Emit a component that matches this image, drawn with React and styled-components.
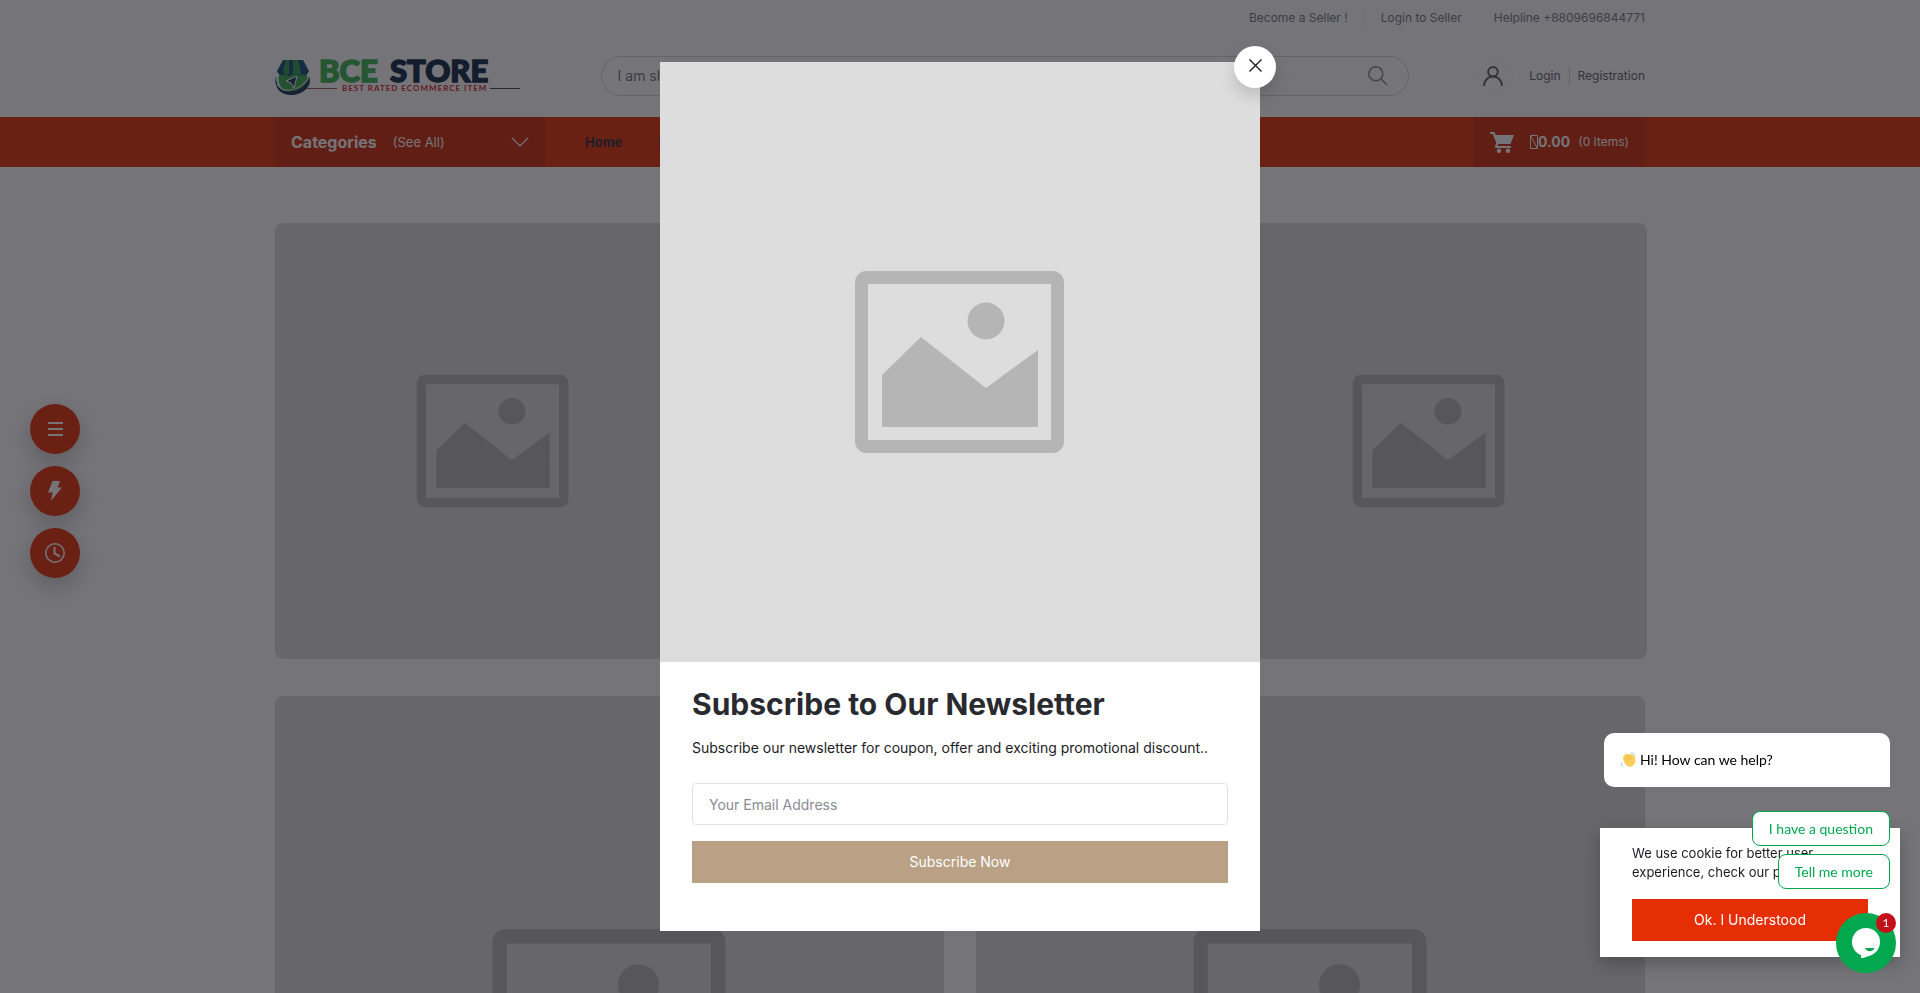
import React, { useState } from 'react'
import styled, { createGlobalStyle } from 'styled-components'

const GlobalStyle = createGlobalStyle`
  *, *::before, *::after {
    box-sizing: border-box;
  }

  body {
    margin: 0;
    height: 100vh;
    overflow: hidden;
    background: #fff;
    color: #1b1b1f;
    font-family: Inter, "Liberation Sans", sans-serif;
    font-size: 14px;
    line-height: 20px;
  }

  a {
    color: inherit;
    text-decoration: none;
  }

  button, input {
    margin: 0;
    font: inherit;
  }

  button {
    padding: 0;
    border: 0;
    cursor: pointer;
  }

  h3, p {
    margin: 0;
  }

  svg {
    display: block;
  }
`

const Container = styled.div`
  display: flex;
  align-items: center;
  width: 100%;
  max-width: 1400px;
  margin: 0 auto;
  padding: 0 15px;
`

const TopLinks = styled(Container)`
  justify-content: flex-end;
  height: 36px;
  gap: 32px;
  font-size: 12px;
  color: #77777c;
`

const SellerLink = styled.a`
  padding-right: 16px;
  margin-right: -16px;
  border-right: 1px solid #eee;
`

const HeaderRow = styled(Container)`
  justify-content: space-between;
  height: 80px;
  margin-bottom: 1px;
`

const LogoLink = styled.a`
  flex: 0 0 325px;
`

const SearchForm = styled.form`
  display: flex;
  align-items: center;
  flex: 1;
  max-width: 808px;
  height: 40px;
  padding: 0 20px 0 14px;
  border: 1px solid #d5d5d8;
  border-radius: 20px;
`

const SearchInput = styled.input`
  flex: 1;
  min-width: 0;
  border: 0;
  outline: 0;
  background: transparent;

  &::placeholder {
    color: #77777c;
    opacity: 1;
  }
`

const IconButton = styled.button`
  background: transparent;
  color: #8a8a90;
`

const Account = styled.div`
  display: flex;
  align-items: center;
  margin-left: 64px;
  font-size: 12px;
  color: #5c5c62;
`

const Avatar = styled.span`
  display: flex;
  align-items: center;
  justify-content: center;
  width: 40px;
  height: 40px;
  margin-right: 16px;
  border: 1px solid #fafafa;
  border-radius: 50%;
`

const LoginLink = styled.a`
  padding-right: 8px;
  margin-right: 8px;
  border-right: 1px solid #d8d8dc;
`

const NavBar = styled.nav`
  background: #e62e04;
`

const NavRow = styled(Container)`
  height: 50px;
`

const CategoryButton = styled.button`
  display: flex;
  align-items: center;
  width: 270px;
  height: 100%;
  padding: 0 16px;
  background: rgba(0, 0, 0, 0.1);
  color: #fff;
`

const CategoryTitle = styled.span`
  margin-right: 16px;
  font-size: 16px;
  font-weight: 700;
`

const CategoryHint = styled.span`
  flex: 1;
  font-size: 13px;
  text-align: left;
`

const Menu = styled.div`
  display: flex;
  flex: 1;
  gap: 36px;
  padding-left: 40px;
  font-size: 13px;
  font-weight: 700;
  color: #2a2a36;
`

const CartLink = styled.a`
  display: flex;
  align-items: center;
  height: 100%;
  padding: 0 16px;
  background: rgba(0, 0, 0, 0.1);
  color: #fff;
`

const CartTotal = styled.span`
  display: flex;
  align-items: center;
  margin: 0 8px 0 16px;
  font-weight: 700;
`

const CartCount = styled.span`
  font-size: 12px;
`

const Section = styled(Container)`
  gap: 32px;
  padding-top: ${props => props.$top}px;
  padding-right: ${props => props.$bleed ? 13 : 15}px;
`

const Card = styled.a`
  flex: 1;
  aspect-ratio: 1;
  overflow: hidden;
  border-radius: 8px;
  background: #ddd;
`

const QuickLinks = styled.div`
  position: fixed;
  top: 404px;
  left: 30px;
  display: flex;
  flex-direction: column;
  gap: 12px;
`

const QuickButton = styled.button`
  display: flex;
  align-items: center;
  justify-content: center;
  width: 50px;
  height: 50px;
  border-radius: 50%;
  background: #e62e04;
  color: #fff;
  box-shadow: 0 8px 24px rgba(0, 0, 0, 0.25);
`

const Backdrop = styled.div`
  position: fixed;
  inset: 0;
  display: flex;
  align-items: center;
  justify-content: center;
  background: rgba(25, 24, 32, 0.6);
`

const Modal = styled.div`
  position: relative;
  width: 600px;
  background: #fff;
`

const CloseButton = styled.button`
  position: absolute;
  top: -16px;
  right: -16px;
  display: flex;
  align-items: center;
  justify-content: center;
  width: 42px;
  height: 42px;
  padding-bottom: 4px;
  border-radius: 50%;
  background: #fff;
  color: #1b1b1b;
  box-shadow: 0 8px 16px rgba(0, 0, 0, 0.15);
`

const ModalImage = styled.div`
  background: #ddd;
`

const ModalBody = styled.div`
  padding: 20px 32px 48px;
`

const Heading = styled.h3`
  font-size: 30px;
  font-weight: 700;
  line-height: 44px;
  color: #292930;
`

const Lead = styled.p`
  margin: 12px 0 25px;
`

const SubscribeForm = styled.form`
  display: flex;
  flex-direction: column;
  gap: 16px;
`

const EmailInput = styled.input`
  height: 42px;
  padding: 0 16px;
  border: 1px solid #e0e0e4;
  border-radius: 4px;
  outline: 0;

  &::placeholder {
    color: #898b92;
    opacity: 1;
  }
`

const SubmitButton = styled.button`
  height: 42px;
  background: ${props => props.$color};
  color: #fff;
`

const CookieBox = styled.div`
  position: fixed;
  right: 20px;
  bottom: 36px;
  display: flex;
  flex-direction: column;
  width: 300px;
  padding: 16px 32px;
  background: #fff;
  box-shadow: 0 6px 16px rgba(0, 0, 0, 0.25);
`

const CookieText = styled.p`
  margin-bottom: 17px;
  font-size: 13px;
  line-height: 19px;
`

const Chat = styled.div`
  position: fixed;
  right: 30px;
  bottom: 104px;
  display: flex;
  flex-direction: column;
  align-items: flex-end;
  gap: 8px;
  font-family: Lato, sans-serif;
  font-size: 14px;
`

const ChatMessage = styled.div`
  display: flex;
  align-items: center;
  gap: 4px;
  width: 286px;
  height: 54px;
  margin-bottom: 16px;
  padding: 0 16px;
  border-radius: 10px 10px 0 10px;
  background: #fff;
  color: #000;
`

const ChatOption = styled.button`
  height: 35px;
  padding: 0 16px;
  border: 1px solid #03a84e;
  border-radius: 8px;
  background: #fff;
  color: #03a84e;
`

const ChatLauncher = styled.button`
  position: fixed;
  right: 24px;
  bottom: 20px;
  display: flex;
  align-items: center;
  justify-content: center;
  width: 60px;
  height: 60px;
  border-radius: 50%;
  background: #03a84e;
`

const ChatBadge = styled.span`
  position: absolute;
  top: 0;
  right: 0;
  width: 20px;
  height: 20px;
  border-radius: 50%;
  background: #c4101a;
  color: #fff;
  font-family: Lato, sans-serif;
  font-size: 12px;
  line-height: 19px;
  text-align: center;
`

const Placeholder = () => (
  <svg viewBox='0 0 600 600' width='100%' aria-hidden='true'>
    <rect x='201.5' y='215.5' width='196' height='169' rx='5' fill='none' stroke='#b5b5b5' strokeWidth='13' />
    <circle cx='326' cy='259' r='18.5' fill='#b5b5b5' />
    <path d='M222 313l39-38 65 51 52-38v77H222z' fill='#b5b5b5' />
  </svg>
)

const Logo = () => (
  <svg width='245' height='44' viewBox='0 -4 245 44' role='img' aria-label='BCE Store'>
    <circle cx='18' cy='21' r='14.5' fill='#35a94c' />
    <path d='M8 2h20l6 11a5 5 0 0 1-8 3 5 5 0 0 1-8 0 5 5 0 0 1-8 0 5 5 0 0 1-8-3z' fill='#164a74' />
    <path d='M14 2h-3L8 13a4 4 0 0 0 6 3z M18 2h5l3 13a5 5 0 0 1-8 1z' fill='#2c9b4c' />
    <path d='M11 23l11-5-3 12-3-5z' fill='#12304f' stroke='#fff' />
    <path d='M1 18c0 12 8 17 16 15 9-1 16-7 17-15 4 11-6 18-16 19C7 38-2 31 1 18z' fill='#12304f' />
    <path d='M2 26c5 9 20 9 31-5' fill='none' stroke='#d8e6df' strokeWidth='1.2' />
    <g fontFamily='Lato' fontSize='31' fontWeight='900' strokeWidth='1.5'>
      <text x='44' y='24' fill='#35b34c' stroke='#35b34c'>BCE</text>
      <text x='115' y='24' fill='#0e2742' stroke='#0e2742'>STORE</text>
    </g>
    <path d='M31 30.5h31' stroke='#9a5548' />
    <text x='67' y='33' fontFamily='Lato' fontSize='8' fontWeight='700' letterSpacing='1' fill='#d32023'>BEST RATED ECOMMERCE ITEM</text>
    <path d='M215 30.5h30' stroke='#444' />
  </svg>
)

const App = () => {
  const [open, setOpen] = useState(true)

  return (
    <>
      <GlobalStyle />
      <header>
        <TopLinks>
          <SellerLink href='#seller'>Become a Seller !</SellerLink>
          <a href='#seller-login'>Login to Seller</a>
          <a href='tel:+8809696844771'>Helpline +8809696844771</a>
        </TopLinks>
        <HeaderRow>
          <LogoLink href='#home'>
            <Logo />
          </LogoLink>
          <SearchForm>
            <SearchInput aria-label='Search' placeholder='I am shopping for...' />
            <IconButton type='button' aria-label='Search'>
              <svg width='20' height='20' viewBox='0 0 20 20' fill='none' stroke='currentColor' strokeWidth='1.5'>
                <circle cx='7.8' cy='7.8' r='7' />
                <path d='M12.8 12.8l6.5 6.5' />
              </svg>
            </IconButton>
          </SearchForm>
          <Account>
            <Avatar>
              <svg width='20' height='20' viewBox='0 0 20 20' fill='none' stroke='currentColor' strokeWidth='2'>
                <circle cx='10' cy='5.8' r='4.8' />
                <path d='M1 20c0-5.500 4-9.400 9-9.400s9 3.900 9 9.400' />
              </svg>
            </Avatar>
            <LoginLink href='#login'>Login</LoginLink>
            <a href='#registration'>Registration</a>
          </Account>
        </HeaderRow>
        <NavBar>
          <NavRow>
            <CategoryButton>
              <CategoryTitle>Categories</CategoryTitle>
              <CategoryHint>(See All)</CategoryHint>
              <svg width='18' height='10' viewBox='0 0 18 10' fill='none' stroke='currentColor' strokeWidth='1.2'>
                <path d='M1 1l8 8 8-8' />
              </svg>
            </CategoryButton>
            <Menu>
              <a href='#home'>Home</a>
              <a href='#flash'>Flash Sale</a>
            </Menu>
            <CartLink href='#cart'>
              <svg width='24' height='21' viewBox='0 0 24 21' fill='currentColor'>
                <path d='M0 0h4.500l1.200 3H24l-3.500 9H8.300l-1 2H21v2H6.500c-1.500 0-2-1-1.500-2l1.400-3L2.800 2H0z' />
                <circle cx='9' cy='18.800' r='2.200' />
                <circle cx='18' cy='18.800' r='2.200' />
              </svg>
              <CartTotal>
                <svg width='8' height='14' viewBox='0 0 8 14' fill='none' stroke='currentColor' role='img' aria-label='Taka'>
                  <path d='M0.500 0.500h7v13h-7zL7.500 13.500' />
                </svg>
                0.00
              </CartTotal>
              <CartCount>(0 Items)</CartCount>
            </CartLink>
          </NavRow>
        </NavBar>
      </header>

      <main>
        <Section $top={56} $bleed>
          {['first', 'second', 'third'].map(name => (
            <Card key={name} href={`#${name}`} aria-label={name}>
              <Placeholder />
            </Card>
          ))}
        </Section>
        <Section $top={37}>
          {['left', 'right'].map(name => (
            <Card key={name} href={`#${name}`} aria-label={name}>
              <Placeholder />
            </Card>
          ))}
        </Section>
      </main>

      <QuickLinks>
        <QuickButton aria-label='Categories'>
          <svg width='15' height='14' viewBox='0 0 15 14' fill='none' stroke='currentColor' strokeWidth='2'>
            <path d='M0 1h15M0 7h15M0 13h15' />
          </svg>
        </QuickButton>
        <QuickButton aria-label='Flash deals'>
          <svg width='14' height='20' viewBox='0 0 14 20' fill='currentColor'>
            <path d='M4.500 0H12L9.500 6.500H14L2.800 20l2-8.500H0z' />
          </svg>
        </QuickButton>
        <QuickButton aria-label='Todays deals'>
          <svg width='20' height='20' viewBox='0 0 20 20' fill='none' stroke='currentColor' strokeWidth='1.5'>
            <circle cx='10' cy='10' r='9.200' />
            <path d='M9.500 4v6.500l5.500 3' strokeWidth='2' />
          </svg>
        </QuickButton>
      </QuickLinks>

      {open && (
        <Backdrop>
          <Modal role='dialog' aria-labelledby='newsletter-title'>
            <ModalImage>
              <Placeholder />
            </ModalImage>
            <ModalBody>
              <Heading id='newsletter-title'>Subscribe to Our Newsletter</Heading>
              <Lead>Subscribe our newsletter for coupon, offer and exciting promotional discount..</Lead>
              <SubscribeForm>
                <EmailInput type='email' aria-label='Your Email Address' placeholder='Your Email Address' />
                <SubmitButton type='button' $color='#baa185'>Subscribe Now</SubmitButton>
              </SubscribeForm>
            </ModalBody>
            <CloseButton aria-label='Close' onClick={() => setOpen(false)}>
              <svg width='13' height='13' viewBox='0 0 13 13' fill='none' stroke='currentColor' strokeWidth='1.400'>
                <path d='M0.500 0.500l12 12M12.500 0.500l-12 12' />
              </svg>
            </CloseButton>
          </Modal>
        </Backdrop>
      )}

      <CookieBox>
        <CookieText>We use cookie for better user experience, check our policy here</CookieText>
        <SubmitButton $color='#e62e04'>Ok. I Understood</SubmitButton>
      </CookieBox>

      <Chat>
        <ChatMessage>
          <svg width='16' height='16' viewBox='0 0 16 16' aria-hidden='true'>
            <path d='M3 4.500l1.500-1.200L6 2l1.500-.6L9 2.500l2-.5 1.500 2 .5-1.500 1.500.5.800 5c0 4-2 6.500-5 6.800-3 .2-5-2-6.500-5.500z' fill='#fbcf59' />
            <path d='M4.500 5l3 4M6.500 3.500l3 4.500M9 3l2.500 4.500' fill='none' stroke='#e8a93a' strokeWidth='0.700' />
            <path d='M1 11c.3 1.500 1 2.500 2.300 3M11 .8c1.400.2 2.500.8 3 2' fill='none' stroke='#7db8e8' strokeWidth='0.900' />
          </svg>
          Hi! How can we help?
        </ChatMessage>
        <ChatOption>I have a question</ChatOption>
        <ChatOption>Tell me more</ChatOption>
      </Chat>
      <ChatLauncher aria-label='Open chat'>
        <svg width='28' height='30' viewBox='0 0 28 30'>
          <circle cx='14' cy='14' r='14' fill='#fff' />
          <path d='M9 25v5.500c6-1.200 11-3.500 15-7z' fill='#fff' />
          <path d='M13 20h9.500c-1 2.200-2.800 3.200-4.800 3.200s-3.700-1-4.700-3.200z' fill='#03a84e' />
        </svg>
        <ChatBadge>1</ChatBadge>
      </ChatLauncher>
    </>
  )
}

export default App
